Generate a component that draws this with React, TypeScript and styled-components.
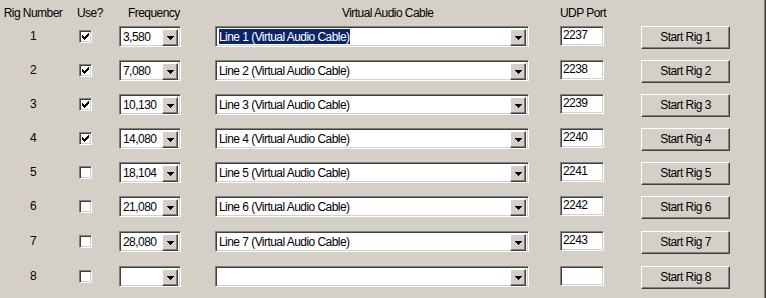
import React from 'react';
import styled, { createGlobalStyle, css } from 'styled-components';

const GlobalStyle = createGlobalStyle`
  body {
    margin: 0;
    background: #d4d0c8;
    font-family: "Liberation Sans", Arial, sans-serif;
    font-size: 12px;
    letter-spacing: -0.55px;
    color: #000;
  }
`;

const sunken = css`
  box-sizing: border-box;
  border: 1px solid;
  border-color: #808080 #ffffff #ffffff #808080;
  box-shadow: inset 1px 1px 0 #404040, inset -1px -1px 0 #d4d0c8;
  background: #ffffff;
`;

const raised = css`
  box-sizing: border-box;
  border: 1px solid;
  border-color: #ffffff #404040 #404040 #ffffff;
  box-shadow: inset -1px -1px 0 #808080, inset 1px 1px 0 #d4d0c8;
  background: #d4d0c8;
`;

interface Rig {
  freq: string;
  cable: string;
  port: string;
  used: boolean;
}

const rigs: Rig[] = [
  { freq: '3,580', cable: 'Line 1 (Virtual Audio Cable)', port: '2237', used: true },
  { freq: '7,080', cable: 'Line 2 (Virtual Audio Cable)', port: '2238', used: true },
  { freq: '10,130', cable: 'Line 3 (Virtual Audio Cable)', port: '2239', used: true },
  { freq: '14,080', cable: 'Line 4 (Virtual Audio Cable)', port: '2240', used: true },
  { freq: '18,104', cable: 'Line 5 (Virtual Audio Cable)', port: '2241', used: false },
  { freq: '21,080', cable: 'Line 6 (Virtual Audio Cable)', port: '2242', used: false },
  { freq: '28,080', cable: 'Line 7 (Virtual Audio Cable)', port: '2243', used: false },
  { freq: '', cable: '', port: '', used: false },
];

function Arrow() {
  return (
    <svg width="7" height="4" viewBox="0 0 7 4" shapeRendering="crispEdges">
      <path d="M0 0h7v1H0zM1 1h5v1H1zM2 2h3v1H2zM3 3h1v1H3z" fill="#000" />
    </svg>
  );
}

function Check() {
  return (
    <svg width="7" height="7" viewBox="0 0 7 7" shapeRendering="crispEdges">
      <path
        d="M6 0h1v1H6zM5 1h2v1H5zM0 2h1v1H0zM4 2h3v1H4zM0 3h2v1H0zM3 3h3v1H3zM0 4h5v1H0zM1 5h3v1H1zM2 6h1v1H2z"
        fill="#000"
      />
    </svg>
  );
}

function Combo({ width, value, selected }: { width: number; value: string; selected?: boolean }) {
  return (
    <ComboBox $width={width}>
      <ComboText>{selected ? <Selection>{value}</Selection> : value}</ComboText>
      <DropButton>
        <Arrow />
      </DropButton>
    </ComboBox>
  );
}

export default function App() {
  return (
    <>
      <GlobalStyle />
      <Panel>
        <Grid>
          <HeaderCell $indent={0} $center>Rig Number</HeaderCell>
          <HeaderCell $indent={11}>Use?</HeaderCell>
          <HeaderCell $indent={9}>Frequency</HeaderCell>
          <HeaderCell $indent={127}>Virtual Audio Cable</HeaderCell>
          <HeaderCell $indent={0}>UDP Port</HeaderCell>
          <span />
          {rigs.map((rig, i) => (
            <React.Fragment key={i}>
              <RigNumber>{i + 1}</RigNumber>
              <CheckBox>{rig.used && <Check />}</CheckBox>
              <Combo width={62} value={rig.freq} />
              <Combo width={314} value={rig.cable} selected={i === 0} />
              <PortField>{rig.port}</PortField>
              <StartButton>Start Rig {i + 1}</StartButton>
            </React.Fragment>
          ))}
        </Grid>
      </Panel>
    </>
  );
}

const Panel = styled.div`
  box-sizing: border-box;
  width: 765px;
  height: 298px;
  border-right: 1px solid #808080;
  box-shadow: 1px 0 0 #404040;
  overflow: hidden;
`;

const Grid = styled.div`
  display: grid;
  grid-template-columns: 66px 53px 96px 345px 81px 1fr;
  grid-template-rows: 26px repeat(5, 34px) 35px 35px 32px;
  align-items: start;
`;

const HeaderCell = styled.div<{ $indent: number; $center?: boolean }>`
  align-self: center;
  padding-left: ${(p) => p.$indent}px;
  text-align: ${(p) => (p.$center ? 'center' : 'left')};
  line-height: 14px;
  margin-top: -1px;
  white-space: nowrap;
`;

const RigNumber = styled.div`
  text-align: center;
  line-height: 21px;
`;

const CheckBox = styled.div`
  ${sunken};
  width: 13px;
  height: 13px;
  margin: 4px 0 0 13px;
  display: flex;
  align-items: center;
  justify-content: center;
`;

const ComboBox = styled.div<{ $width: number }>`
  ${sunken};
  width: ${(p) => p.$width}px;
  height: 21px;
  display: flex;
  padding: 2px;
`;

const ComboText = styled.div`
  flex: 1;
  line-height: 17px;
  padding-left: 1px;
  white-space: nowrap;
  overflow: hidden;
`;

const Selection = styled.span`
  background: #0a246a;
  color: #ffffff;
  padding: 1px 1px 1px 0;
`;

const DropButton = styled.div`
  ${raised};
  width: 16px;
  height: 17px;
  display: flex;
  align-items: center;
  justify-content: center;
  padding-top: 1px;
`;

const PortField = styled.div`
  ${sunken};
  width: 44px;
  height: 20px;
  padding-left: 2px;
  line-height: 16px;
`;

const StartButton = styled.button`
  ${raised};
  width: 89px;
  height: 23px;
  padding: 0;
  font: inherit;
  letter-spacing: inherit;
  color: #000;
  text-align: center;
  line-height: 19px;
`;
